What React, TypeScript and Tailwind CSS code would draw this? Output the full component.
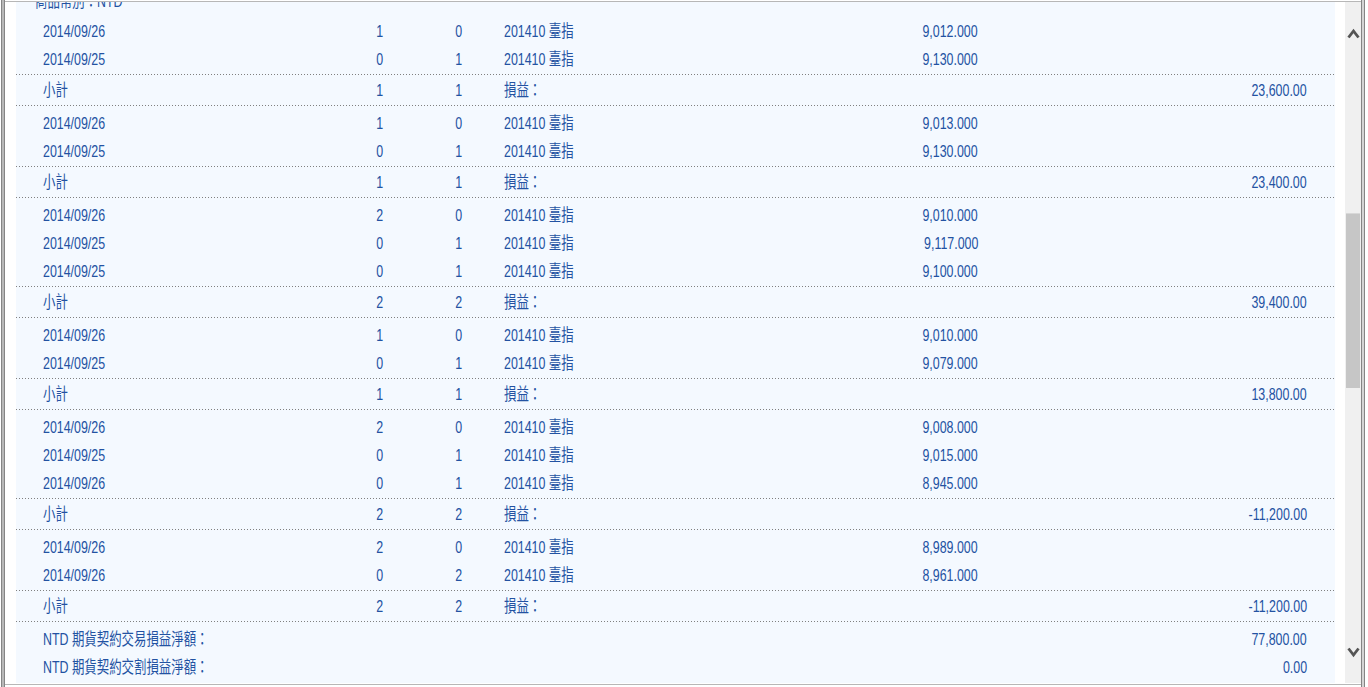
import clsx from "clsx";
import type { ReactNode } from "react";

type Trade = { date: string; buy: string; sell: string; price: string };
type Group = { trades: Trade[]; buy: string; sell: string; pnl: string };

const PRODUCT = "201410 臺指";

const groups: Group[] = [
  {
    trades: [
      { date: "2014/09/26", buy: "1", sell: "0", price: "9,012.000" },
      { date: "2014/09/25", buy: "0", sell: "1", price: "9,130.000" },
    ],
    buy: "1",
    sell: "1",
    pnl: "23,600.00",
  },
  {
    trades: [
      { date: "2014/09/26", buy: "1", sell: "0", price: "9,013.000" },
      { date: "2014/09/25", buy: "0", sell: "1", price: "9,130.000" },
    ],
    buy: "1",
    sell: "1",
    pnl: "23,400.00",
  },
  {
    trades: [
      { date: "2014/09/26", buy: "2", sell: "0", price: "9,010.000" },
      { date: "2014/09/25", buy: "0", sell: "1", price: "9,117.000" },
      { date: "2014/09/25", buy: "0", sell: "1", price: "9,100.000" },
    ],
    buy: "2",
    sell: "2",
    pnl: "39,400.00",
  },
  {
    trades: [
      { date: "2014/09/26", buy: "1", sell: "0", price: "9,010.000" },
      { date: "2014/09/25", buy: "0", sell: "1", price: "9,079.000" },
    ],
    buy: "1",
    sell: "1",
    pnl: "13,800.00",
  },
  {
    trades: [
      { date: "2014/09/26", buy: "2", sell: "0", price: "9,008.000" },
      { date: "2014/09/25", buy: "0", sell: "1", price: "9,015.000" },
      { date: "2014/09/26", buy: "0", sell: "1", price: "8,945.000" },
    ],
    buy: "2",
    sell: "2",
    pnl: "-11,200.00",
  },
  {
    trades: [
      { date: "2014/09/26", buy: "2", sell: "0", price: "8,989.000" },
      { date: "2014/09/26", buy: "0", sell: "2", price: "8,961.000" },
    ],
    buy: "2",
    sell: "2",
    pnl: "-11,200.00",
  },
];

// the report font is narrow, so squeeze the glyphs sideways
function Txt({ children, align }: { children?: ReactNode; align: "l" | "c" | "r" }) {
  return (
    <span
      className={clsx(
        "inline-block whitespace-nowrap scale-x-[0.73]",
        align === "l" && "origin-left",
        align === "c" && "origin-center",
        align === "r" && "origin-right"
      )}
    >
      {children}
    </span>
  );
}

function Row({
  cells,
  className,
}: {
  cells: (string | undefined)[];
  className?: string;
}) {
  const [date, buy, sell, product, price, amount] = cells;
  return (
    <div
      className={clsx(
        "grid grid-cols-[297px_80px_78px_300px_180px_329px] items-center pl-[27px]",
        className
      )}
    >
      <div>
        <Txt align="l">{date}</Txt>
      </div>
      <div className="text-center">
        <Txt align="c">{buy}</Txt>
      </div>
      <div className="text-center">
        <Txt align="c">{sell}</Txt>
      </div>
      <div className="pl-[6px]">
        <Txt align="l">{product}</Txt>
      </div>
      <div className="text-right">
        <Txt align="r">{price}</Txt>
      </div>
      <div className="text-right">
        <Txt align="r">{amount}</Txt>
      </div>
    </div>
  );
}

function Dotted() {
  return (
    <div className="h-px bg-[image:repeating-linear-gradient(90deg,#808080_0_1px,transparent_1px_3px)]" />
  );
}

function Chevron({ down }: { down?: boolean }) {
  return (
    <svg width="13" height="12" viewBox="0 0 13 12" className={clsx(down && "rotate-180")}>
      <path d="M1.5 9.5 L6.5 3 L11.5 9.5" fill="none" stroke="#555" strokeWidth="2.8" />
    </svg>
  );
}

export default function App() {
  return (
    <div className="flex h-[687px] w-[1368px] overflow-hidden bg-white font-['Liberation_Sans','Noto_Sans_CJK_TC',sans-serif] text-[17px] text-[#2352a2]">
      <div className="ml-px w-[4px] shrink-0 border-x border-[#858585] bg-[#b8b8b8]" />
      <div className="flex min-w-0 flex-1 flex-col">
        <div className="mt-px h-px bg-[#b7b7b7]" />
        <div className="flex min-h-0 flex-1">
          <div className="w-[11px] shrink-0" />
          <div className="min-w-0 flex-1 overflow-hidden bg-[#f4f9ff]">
            <div className="-mt-[16px]">
              <div className="h-[28px] pt-[2px] pl-[19px] leading-[28px]">
                <Txt align="l">商品幣別：NTD</Txt>
              </div>
              {groups.map((g, gi) => (
                <div key={gi}>
                  <div className="pt-[4px]">
                    {g.trades.map((t, ti) => (
                      <Row
                        key={ti}
                        className="h-[28px] leading-[28px]"
                        cells={[t.date, t.buy, t.sell, PRODUCT, t.price, ""]}
                      />
                    ))}
                  </div>
                  <Dotted />
                  <Row
                    className="h-[30px] pt-[2px] leading-[28px]"
                    cells={["小計", g.buy, g.sell, "損益：", "", g.pnl]}
                  />
                  <Dotted />
                </div>
              ))}
              <div className="pt-[4px]">
                <Row
                  className="h-[28px] leading-[28px]"
                  cells={["NTD 期貨契約交易損益淨額：", "", "", "", "", "77,800.00"]}
                />
                <Row
                  className="h-[28px] leading-[28px]"
                  cells={["NTD 期貨契約交割損益淨額：", "", "", "", "", "0.00"]}
                />
              </div>
            </div>
          </div>
          <div className="w-[10px] shrink-0" />
          <div className="flex w-[16px] shrink-0 flex-col items-center bg-[#f0f0f0] pt-[26px] pb-[25px]">
            <Chevron />
            <div className="mt-[173px] h-[175px] w-[14px] border-t border-[#d8d8d8] bg-[#c6c6c6]" />
            <div className="flex-1" />
            <Chevron down />
          </div>
        </div>
        <div className="mt-px mb-[2px] h-px bg-[#b7b7b7]" />
      </div>
      <div className="mr-[3px] w-[4px] shrink-0 border-x border-[#858585] bg-[#d4d4d4]" />
    </div>
  );
}
